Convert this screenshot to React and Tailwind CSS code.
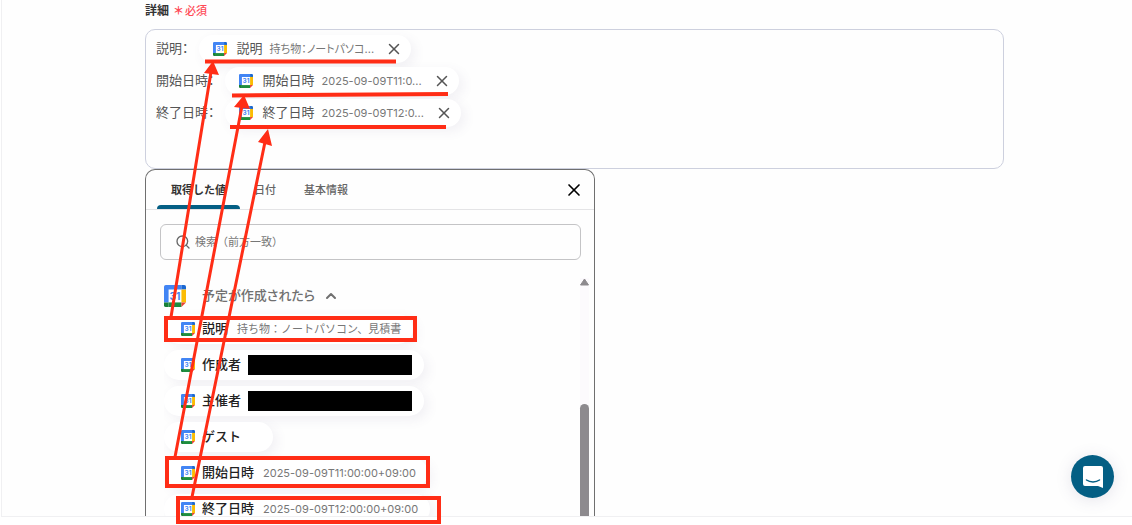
import React, { useState } from 'react';
import { ChevronUp, Search, X } from 'lucide-react';

const tabs = ['取得した値', '日付', '基本情報'];

const fieldRows = [
  { id: 'description', prefix: '説明：', label: '説明', value: '持ち物：ノートパソコ...' },
  { id: 'start', prefix: '開始日時：', label: '開始日時', value: '2025-09-09T11:0...' },
  { id: 'end', prefix: '終了日時：', label: '終了日時', value: '2025-09-09T12:0...' }
];

const outputs = [
  { id: 'description', label: '説明', value: '持ち物：ノートパソコン、見積書' },
  { id: 'creator', label: '作成者', masked: true },
  { id: 'organizer', label: '主催者', masked: true },
  { id: 'guest', label: 'ゲスト' },
  { id: 'start', label: '開始日時', value: '2025-09-09T11:00:00+09:00' },
  { id: 'end', label: '終了日時', value: '2025-09-09T12:00:00+09:00' }
];

// ------------------------
// Icons
// ------------------------
function CalendarIcon({ className }) {
  return (
    <svg viewBox="0 0 24 24" className={className} aria-hidden="true">
      <path d="M5 5h14v14H5z" fill="#fff" />
      <path d="M2 0h17v5H5v14H0V2a2 2 0 0 1 2-2z" fill="#4285f4" />
      <path d="M19 0h3a2 2 0 0 1 2 2v3h-5z" fill="#1967d2" />
      <path d="M19 5h5v14h-5z" fill="#fbbc04" />
      <path d="M5 19h14v5H5z" fill="#1e8e3e" />
      <path d="M0 19h5v5H2a2 2 0 0 1-2-2z" fill="#188038" />
      <path d="M19 19h5l-5 5z" fill="#ea4335" />
      <text x="12" y="16" textAnchor="middle" fontSize="11" fontWeight="700" fill="#4285f4">
        31
      </text>
    </svg>
  );
}

function ChatIcon({ className }) {
  return (
    <svg viewBox="0 0 20 22" className={className} aria-hidden="true">
      <path d="M2 0h16a2 2 0 0 1 2 2v20l-5-2H2a2 2 0 0 1-2-2V2a2 2 0 0 1 2-2z" fill="#fff" />
      <path d="M3.5 14c3.5 2.6 9.5 2.6 13 0" fill="none" stroke="#045f84" strokeWidth="1.5" strokeLinecap="round" />
    </svg>
  );
}

// ------------------------
// Detail field with value chips
// ------------------------
function DetailField() {
  return (
    <div
      role="textbox"
      aria-labelledby="detail-label"
      className="flex h-[140px] shrink-0 flex-col gap-1 rounded-[10px] border border-[#cdd0de] px-2.5 pt-[5px] text-[13px] text-[#555] [font-feature-settings:'palt']"
    >
      {fieldRows.map(row => (
        <div key={row.id} className="flex h-7 items-center gap-2.5">
          <span>{row.prefix}</span>
          <span className="flex h-7 items-center rounded-full bg-white pl-3.5 pr-2 shadow-[4px_4px_12px_rgba(90,80,130,0.08)]">
            <CalendarIcon className="mr-2.5 size-3.5" />
            <span className="mr-[7px]">{row.label}</span>
            <span className="mr-[11px] text-[11px] text-[#777]">{row.value}</span>
            <button aria-label={`${row.label}を削除`}>
              <X className="size-[18px] text-[#555]" strokeWidth={2} />
            </button>
          </span>
        </div>
      ))}
    </div>
  );
}

// ------------------------
// Picker panel
// ------------------------
function OutputItem({ item }) {
  return (
    <button className="flex h-[30px] items-center rounded-full bg-white pl-[17px] pr-3 shadow-[4px_4px_12px_rgba(90,80,130,0.08)]">
      <CalendarIcon className="mr-[7px] size-3.5" />
      <span className="text-[13px] font-medium text-[#222]">{item.label}</span>
      {item.value && <span className="ml-[9px] text-[11px] text-[#777]">{item.value}</span>}
      {item.masked && <span className="ml-[7px] h-5 w-[164px] bg-black" />}
      {!item.value && !item.masked && <span className="w-5" />}
    </button>
  );
}

function PickerPanel() {
  const [activeTab, setActiveTab] = useState(tabs[0]);
  const [query, setQuery] = useState('');
  const [open, setOpen] = useState(true);

  return (
    <div className="flex min-h-0 w-[450px] flex-1 flex-col rounded-t-[10px] border border-b-0 border-[#6f6f6f]">
      <div className="flex h-10 shrink-0 items-stretch border-b border-[#e4e4e6] pl-[11px] pr-2.5">
        <div role="tablist" className="flex flex-1">
          {tabs.map(tab => (
            <button
              key={tab}
              role="tab"
              aria-selected={tab === activeTab}
              onClick={() => setActiveTab(tab)}
              className={
                tab === activeTab
                  ? 'flex flex-col items-center justify-between px-3.5 text-[11px] font-bold text-[#333]'
                  : 'flex flex-col items-center justify-between px-3.5 text-[11px] font-medium text-[#666]'
              }
            >
              <span className="pt-3">{tab}</span>
              {tab === activeTab && <span className="-mx-3.5 h-1 self-stretch rounded-t bg-[#045f84]" />}
            </button>
          ))}
        </div>
        <button aria-label="閉じる">
          <X className="size-5 text-black" />
        </button>
      </div>

      <label className="ml-3.5 mr-[13px] mt-3.5 flex h-9 shrink-0 items-center gap-1 rounded-md border border-[#c4c4c6] px-3.5">
        <Search className="size-4 text-[#666]" />
        <input
          aria-label="検索"
          value={query}
          onChange={e => setQuery(e.target.value)}
          placeholder="検索（前方一致）"
          className="min-w-0 flex-1 text-[11px] outline-none placeholder:text-[#777]"
        />
      </label>

      <div className="mt-[18px] flex min-h-0 flex-1 pl-[18px] pr-[5px]">
        <div className="flex min-w-0 flex-1 flex-col overflow-hidden pt-1.5">
          <button
            onClick={() => setOpen(!open)}
            aria-expanded={open}
            className="flex h-[23px] shrink-0 items-center text-[13px] font-medium text-[#707070] [font-feature-settings:'palt']"
          >
            <CalendarIcon className="mr-4 size-[22px]" />
            予定が作成されたら
            <ChevronUp className="ml-2 size-4" strokeWidth={3} />
          </button>
          {open && (
            <div className="flex flex-col items-start gap-1.5 pt-[7px]">
              {outputs.map(item => (
                <OutputItem key={item.id} item={item} />
              ))}
            </div>
          )}
        </div>
        <div className="flex w-[9px] flex-col bg-[#fcfafd]" aria-hidden="true">
          <svg viewBox="0 0 9 8" className="h-2 w-[9px]">
            <path d="M4.5 1 8.5 7h-8z" fill="#8d8a8e" stroke="#8d8a8e" strokeLinejoin="round" />
          </svg>
          <span className="mt-[118px] flex-1 rounded-t-full bg-[#8d8a8e]" />
        </div>
      </div>
    </div>
  );
}

// Red boxes and arrows linking each output to its chip
function Annotations() {
  return (
    <svg
      className="pointer-events-none absolute left-0 top-0 h-[525px] w-[460px]"
      viewBox="0 0 460 525"
      fill="none"
      stroke="#ff2d16"
      aria-hidden="true"
    >
      <g strokeWidth="4">
        <path d="M205 61.5H396M232 95.5 448 94M230 127H446" />
        <rect x="166" y="318" width="249" height="22" />
        <rect x="167" y="458" width="261" height="28" />
        <rect x="178" y="498" width="261" height="24" />
      </g>
      <path d="M171 317 211 72M175 457 242 106M192 497 265 142" strokeWidth="3" />
      <path d="M213 61 219 75 204 73zM244 95 250 109 234 107zM268 129 272 146 258 142z" fill="#ff2d16" stroke="none" />
    </svg>
  );
}

export default function App() {
  return (
    <div className="relative flex h-screen flex-col overflow-hidden bg-white pb-2 font-['Inter','Noto_Sans_CJK_JP',sans-serif]">
      <main className="ml-px flex min-h-0 flex-1 flex-col border-b border-l border-[#f0f0f2] bg-[#fefefe] pl-[143px] pr-32">
        <div id="detail-label" className="flex h-[29px] shrink-0 items-start gap-1 pt-0.5 text-[12px] leading-[18px] font-bold text-[#333]">
          詳細
          <span className="flex gap-px text-[11px] font-bold text-[#ff4a56]">
            <span>＊</span>
            <span className="font-medium">必須</span>
          </span>
        </div>
        <DetailField />
        <PickerPanel />
      </main>

      <button
        aria-label="チャットを開く"
        className="absolute bottom-[27px] right-[18px] flex size-[43px] items-center justify-center rounded-full bg-[#045f84] shadow-[0_2px_16px_rgba(90,80,130,0.15)]"
      >
        <ChatIcon className="h-[22px] w-5" />
      </button>

      <Annotations />
    </div>
  );
}
